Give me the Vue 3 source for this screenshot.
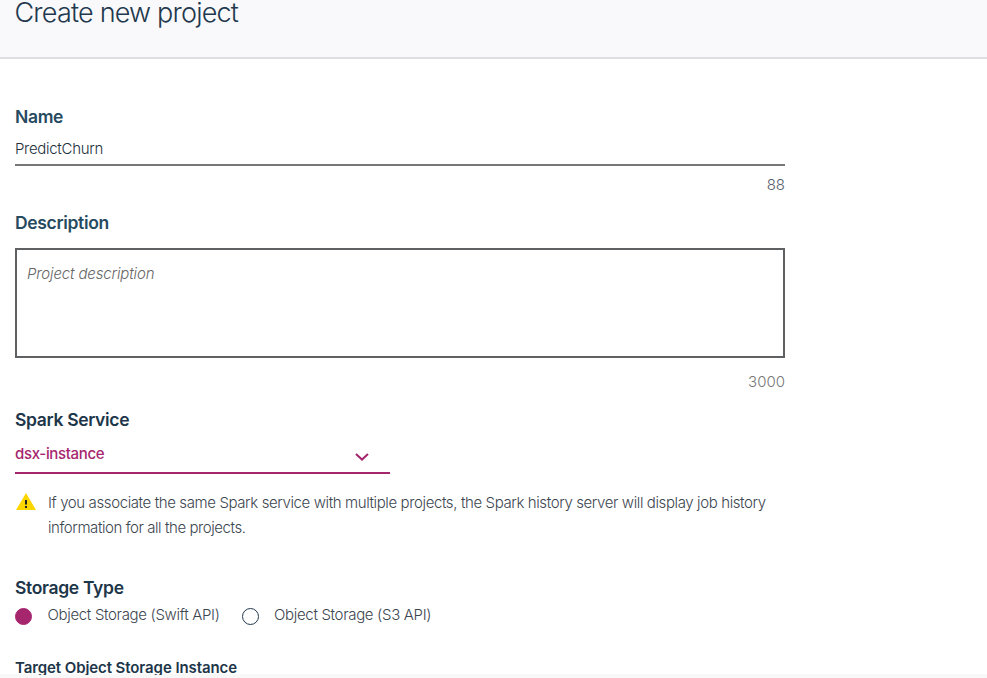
<script setup>
import { ref } from 'vue'

const name = ref('PredictChurn')
const storageType = ref('swift')
const storageOptions = [
  { id: 'swift', label: 'Object Storage (Swift API)' },
  { id: 's3', label: 'Object Storage (S3 API)' },
]
</script>

<template>
  <div class="page">
    <header class="header">
      <h1 class="title">Create new project</h1>
    </header>
    <main class="form">
      <label class="label name-label">Name</label>
      <div class="name-field">{{ name }}</div>
      <div class="counter name-counter">88</div>

      <label class="label description-label">Description</label>
      <div class="description-field">Project description</div>
      <div class="counter">3000</div>

      <label class="label dark spark-label">Spark Service</label>
      <div class="select">
        <span class="select-value">dsx-instance</span>
        <svg class="chevron" width="14" height="8" viewBox="0 0 14 8">
          <path d="M1 1L7 6.6L13 1" fill="none" stroke="#a6266e" stroke-width="2" />
        </svg>
      </div>
      <div class="warning">
        <svg class="warning-icon" width="20" height="17" viewBox="0 0 20 17">
          <path d="M10 0L20 17H0Z" fill="#fdd600" />
          <path d="M9 7h2v4.4H9zM9 13h2v2H9z" fill="#222" />
        </svg>
        <p class="warning-text">
          <span class="line first">If you associate the same Spark service with multiple projects, the Spark history server will display job history</span>
          <span class="line second">information for all the projects.</span>
        </p>
      </div>

      <label class="label dark storage-label">Storage Type</label>
      <div class="radios">
        <div v-for="o in storageOptions" :key="o.id" class="radio" @click="storageType = o.id">
          <span class="dot" :class="{ on: storageType === o.id }"></span>
          <span class="radio-text">{{ o.label }}</span>
        </div>
      </div>

      <div class="target">Target Object Storage Instance</div>
    </main>
    <footer class="footer"></footer>
  </div>
</template>

<style>
body {
  background: #fff;
  overflow: hidden;
}
</style>

<style scoped>
.page {
  display: flex;
  flex-direction: column;
  height: 678px;
  overflow: hidden;
  font-family: Inter, "Liberation Sans", sans-serif;
  font-size: 15px;
  font-weight: 300;
  line-height: 24px;
  color: #3c4650;
}
.header {
  flex: none;
  box-sizing: border-box;
  height: 59px;
  background: #f9f9fb;
  border-bottom: 2px solid #dfdfe1;
  padding-left: 14.5px;
}
.title {
  margin: 0;
  font-size: 27px;
  font-weight: 300;
  line-height: 26px;
  letter-spacing: -0.8px;
  color: #22384d;
}
.form {
  flex: 1;
  min-height: 0;
  overflow: hidden;
  display: flex;
  flex-direction: column;
  width: 770px;
  padding-left: 15px;
}
.form > * {
  flex: none;
}
.label {
  height: 24px;
  font-size: 17.5px;
  font-weight: 600;
  letter-spacing: -0.33px;
  color: #264a60;
}
.dark {
  color: #1d3649;
}
.name-label {
  margin-top: 46px;
}
.name-field {
  box-sizing: border-box;
  height: 37px;
  padding-top: 8px;
  border-bottom: 2px solid #777779;
  letter-spacing: -0.3px;
  color: #22303c;
}
.counter {
  text-align: right;
  color: #777;
}
.name-counter {
  margin-top: 7px;
  color: #555e68;
}
.description-label {
  margin-top: 14px;
}
.description-field {
  box-sizing: border-box;
  height: 110px;
  margin: 13px 0 12px;
  padding: 12px 10px;
  border: 2px solid #5f6062;
  font-style: italic;
  letter-spacing: -0.14px;
  color: #666;
}
.spark-label {
  margin-top: 14px;
}
.select {
  box-sizing: border-box;
  display: flex;
  justify-content: space-between;
  width: 375px;
  height: 42px;
  padding: 10px 21px 0 0;
  border-bottom: 2px solid #a6266e;
  font-weight: 500;
  letter-spacing: -0.35px;
  color: #a6266e;
}
.chevron {
  margin-top: 11px;
}
.warning {
  display: flex;
  gap: 12px;
  margin-top: 17px;
  padding-left: 1px;
}
.warning-icon {
  margin-top: 2px;
}
.warning-text {
  margin: -1px 0 1px;
  line-height: 25px;
}
.line {
  display: block;
  white-space: nowrap;
  letter-spacing: -0.39px;
}
.line.second {
  letter-spacing: -0.43px;
}
.storage-label {
  margin-top: 35px;
}
.radios {
  display: flex;
  gap: 22px;
  margin-top: 3px;
}
.radio {
  display: flex;
  gap: 15.5px;
}
.dot {
  box-sizing: border-box;
  width: 17px;
  height: 17px;
  margin-top: 5px;
  border: 1px solid #22384d;
  border-radius: 50%;
}
.dot.on {
  background: #a6266e;
  border-color: #a6266e;
}
.radio-text {
  letter-spacing: -0.33px;
  white-space: nowrap;
}
.target {
  margin-top: 29px;
  font-weight: 600;
  letter-spacing: -0.09px;
  color: #1d3649;
}
.footer {
  flex: none;
  height: 3px;
  background: #f8f8f8;
  box-shadow: 0 -1px 1px rgba(0, 0, 0, 0.03);
}
</style>
